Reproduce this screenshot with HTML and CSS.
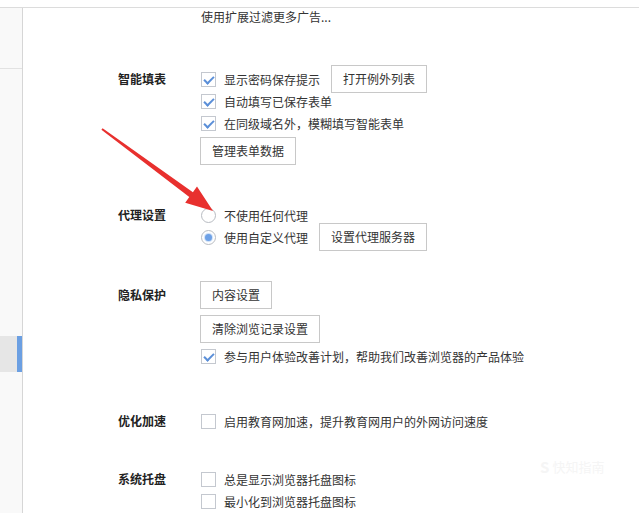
FILE: index.html
```html
<!DOCTYPE html>
<html lang="zh-CN">
<head>
<meta charset="utf-8">
<title>设置</title>
<link rel="stylesheet" href="styles.css">
</head>
<body>
<div class="topbar"></div>
<div class="frame">
  <aside class="sidebar">
    <div class="side-item first"></div>
    <div class="side-item active"></div>
  </aside>
  <main class="content">
    <div class="section intro">
      <div class="label"></div>
      <div class="controls"><div class="line">使用扩展过滤更多广告...</div></div>
    </div>

    <div class="section s-fill">
      <div class="label">智能填表</div>
      <div class="controls">
        <div class="row"><span class="cb checked"></span><span class="txt">显示密码保存提示</span><button class="btn inline">打开例外列表</button></div>
        <div class="row"><span class="cb checked"></span><span class="txt">自动填写已保存表单</span></div>
        <div class="row"><span class="cb checked"></span><span class="txt">在同级域名外，模糊填写智能表单</span></div>
        <button class="btn block gap3">管理表单数据</button>
      </div>
    </div>

    <div class="section s-proxy">
      <div class="label">代理设置</div>
      <div class="controls">
        <div class="row"><span class="radio"></span><span class="txt">不使用任何代理</span></div>
        <div class="row"><span class="radio checked"></span><span class="txt">使用自定义代理</span><button class="btn inline">设置代理服务器</button></div>
      </div>
    </div>

    <div class="section s-privacy">
      <div class="label tall">隐私保护</div>
      <div class="controls">
        <button class="btn block">内容设置</button>
        <button class="btn block gap6">清除浏览记录设置</button>
        <div class="row gap2"><span class="cb checked"></span><span class="txt">参与用户体验改善计划，帮助我们改善浏览器的产品体验</span></div>
      </div>
    </div>

    <div class="section s-speed">
      <div class="label">优化加速</div>
      <div class="controls">
        <div class="row"><span class="cb"></span><span class="txt">启用教育网加速，提升教育网用户的外网访问速度</span></div>
      </div>
    </div>

    <div class="section s-tray">
      <div class="label">系统托盘</div>
      <div class="controls">
        <div class="row"><span class="cb"></span><span class="txt">总是显示浏览器托盘图标</span></div>
        <div class="row"><span class="cb"></span><span class="txt">最小化到浏览器托盘图标</span></div>
      </div>
    </div>
  </main>
</div>

<div class="watermark"><span class="wm-logo">S</span>快知指南</div>

<svg class="arrow" width="639" height="513" viewBox="0 0 639 513" aria-hidden="true">
  <polygon fill="#e8302e" points="101.4,129.8 102.6,128.2 192.9,192.2 197.0,186.6 213,211 185.2,202.7 189.3,197.0"/>
</svg>
</body>
</html>
```

FILE: styles.css
```css
* { box-sizing: border-box; }

html, body {
  margin: 0;
  padding: 0;
  background: #ffffff;
}

body {
  width: 639px;
  height: 513px;
  overflow: hidden;
  position: relative;
  font-family: "Noto Sans CJK SC", "Microsoft YaHei", sans-serif;
  font-size: 12px;
  color: #333333;
}

.topbar {
  height: 8px;
  border-bottom: 1px solid #dcdcdc;
  background: #ffffff;
}

.frame {
  display: flex;
  height: 505px;
}

.sidebar {
  width: 23px;
  flex: none;
  background: #f9f9f9;
  border-right: 1px solid #d6d6d6;
  display: flex;
  flex-direction: column;
}

.side-item.first {
  height: 61px;
  border-bottom: 1px solid #e2e2e2;
}

.side-item.active {
  margin-top: 267px;
  height: 36px;
  background: #e6e6e6;
  border-right: 5px solid #6b9fe2;
}

.content {
  flex: 1;
  padding-left: 95px;
}

.section {
  display: grid;
  grid-template-columns: 82px auto;
  align-items: start;
}

.label {
  font-weight: bold;
  color: #222222;
  line-height: 22px;
}

.label.tall { line-height: 28px; }

.controls {
  display: flex;
  flex-direction: column;
  align-items: flex-start;
}

.line { line-height: 18px; padding-left: 1px; }

.row {
  display: flex;
  align-items: center;
  height: 22px;
  padding-left: 1px;
  white-space: nowrap;
}

.txt { margin-left: 8px; }

.cb {
  position: relative;
  width: 15px;
  height: 15px;
  border: 1px solid #c4c8cf;
  background: #ffffff;
  flex: none;
}

.cb.checked::after {
  content: "";
  position: absolute;
  left: 4px;
  top: 1px;
  width: 4px;
  height: 8px;
  border-right: 2px solid #5b8fd8;
  border-bottom: 2px solid #5b8fd8;
  transform: rotate(45deg);
}

.radio {
  position: relative;
  width: 15px;
  height: 15px;
  border: 1px solid #b8bcc2;
  border-radius: 50%;
  background: #ffffff;
  flex: none;
}

.radio.checked::after {
  content: "";
  position: absolute;
  left: 3px;
  top: 3px;
  width: 7px;
  height: 7px;
  border-radius: 50%;
  background: #6ea1e6;
  box-shadow: 0 0 1px 1px #c9dcf6;
}

.btn {
  font-family: inherit;
  font-size: 12px;
  color: #333333;
  background: #ffffff;
  border: 1px solid #c8c8c8;
  border-radius: 0;
  height: 28px;
  padding: 0 11px;
  line-height: 26px;
  white-space: nowrap;
}

.btn.inline { margin: -3px 0 -3px 11px; }

.gap3 { margin-top: 3px; }
.gap6 { margin-top: 6px; }
.gap2 { margin-top: 2px; }

.s-fill { margin-top: 42px; }
.s-proxy { margin-top: 39px; }
.s-privacy { margin-top: 33px; }
.s-speed { margin-top: 43px; }
.s-tray { margin-top: 36px; }

.arrow {
  position: absolute;
  left: 0;
  top: 0;
  pointer-events: none;
}

.watermark {
  position: absolute;
  left: 540px;
  top: 456px;
  font-size: 13px;
  color: #f5f5f5;
  display: flex;
  align-items: center;
  gap: 3px;
}

.wm-logo {
  font-weight: bold;
  font-size: 15px;
}
```
